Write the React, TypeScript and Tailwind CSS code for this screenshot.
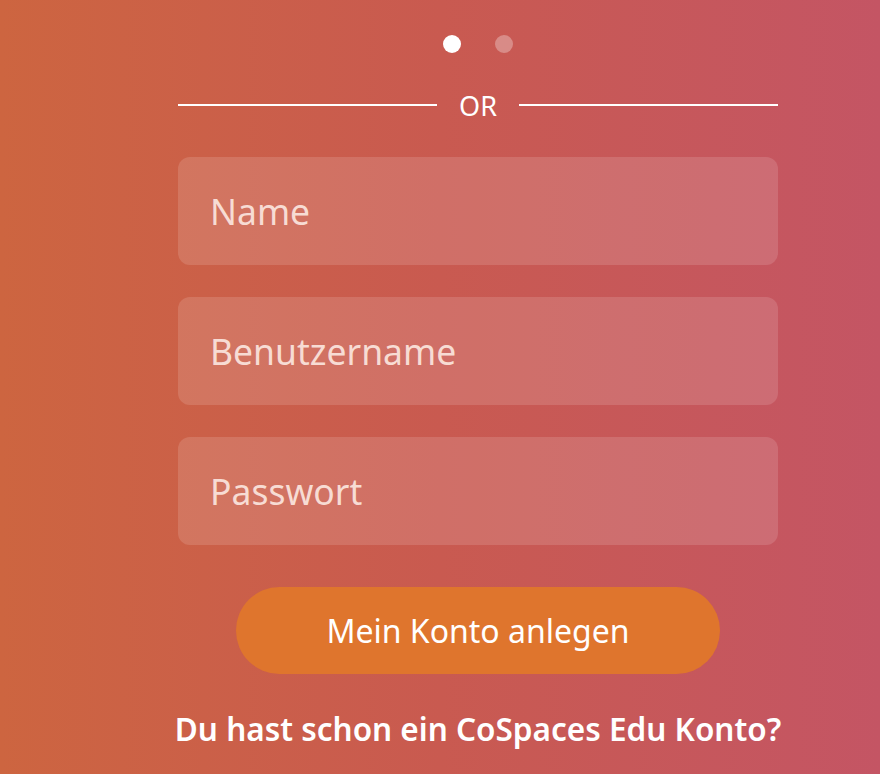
export default function App() {
  const fields = ['Name', 'Benutzername', 'Passwort'];

  return (
    <div
      className="h-[774px] w-full overflow-hidden bg-gradient-to-r from-[#cd6540] via-[#c95a50] to-[#c45564] text-white"
      style={{ fontFamily: '"Noto Sans", "Open Sans", sans-serif' }}
    >
      <div className="mx-auto flex w-[600px] translate-x-[38px] flex-col items-center">
        {/* carousel dots */}
        <div className="mt-[35px] flex gap-[34px]">
          <span className="h-[18px] w-[18px] rounded-full bg-white" />
          <span className="h-[18px] w-[18px] rounded-full bg-white/30" />
        </div>

        {/* divider */}
        <div className="mt-[39px] flex h-[26px] w-full items-center gap-[22px]">
          <div className="h-[2px] flex-1 bg-white" />
          <span className="text-[27px] leading-none">OR</span>
          <div className="h-[2px] flex-1 bg-white" />
        </div>

        <form className="mt-[39px] flex w-full flex-col gap-[32px]" onSubmit={(e) => e.preventDefault()}>
          {fields.map((f) => (
            <input
              key={f}
              type={f === 'Passwort' ? 'password' : 'text'}
              placeholder={f}
              className="h-[108px] w-full rounded-[12px] bg-white/[0.13] px-[32px] text-[35.5px] text-white outline-none placeholder:text-[#f7dcd4]"
            />
          ))}
        </form>

        <button className="mt-[42px] h-[87px] w-[484px] rounded-full bg-[#df752d] text-[32px] text-white">
          Mein Konto anlegen
        </button>

        <p className="mt-[31px] whitespace-nowrap text-[31.5px] font-semibold">
          Du hast schon ein CoSpaces Edu Konto?
        </p>
      </div>
    </div>
  );
}
